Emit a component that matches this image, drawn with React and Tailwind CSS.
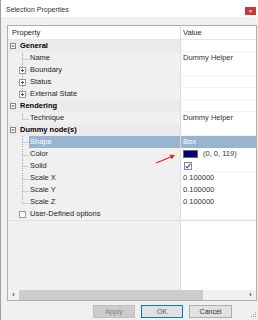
import React from 'react';

const rows = [
  { label: 'General', kind: 'cat' },
  { label: 'Name', value: 'Dummy Helper' },
  { label: 'Boundary', plus: true },
  { label: 'Status', plus: true },
  { label: 'External State', plus: true, last: true },
  { label: 'Rendering', kind: 'cat' },
  { label: 'Technique', value: 'Dummy Helper', last: true },
  { label: 'Dummy node(s)', kind: 'cat' },
  { label: 'Shape', value: 'Box', selected: true },
  { label: 'Color', kind: 'color' },
  { label: 'Solid', kind: 'check' },
  { label: 'Scale X', value: '0.100000' },
  { label: 'Scale Y', value: '0.100000' },
  { label: 'Scale Z', value: '0.100000', last: true },
  { label: 'User-Defined options', kind: 'option' },
];

const TreeGlyph = ({ plus, last, option }) => (
  <svg width="21" height="12" className="shrink-0">
    {!option && (
      <>
        <line x1="14.5" y1="0" x2="14.5" y2={last ? 6.5 : 12} stroke="#a8a8a8" strokeDasharray="1 1" />
        <line x1="14.5" y1="6.5" x2="21" y2="6.5" stroke="#a8a8a8" strokeDasharray="1 1" />
      </>
    )}
    {(plus || option) && (
      <rect x="11.5" y="3.5" width="6" height="6" fill="#fff" stroke="#9a9a9a" />
    )}
    {plus && (
      <>
        <line x1="13" y1="6.5" x2="16" y2="6.5" stroke="#555" />
        <line x1="14.5" y1="5" x2="14.5" y2="8" stroke="#555" />
      </>
    )}
  </svg>
);

const Row = ({ row }) => {
  const cat = row.kind === 'cat';
  return (
    <div className="grid grid-cols-[172px_1fr] h-[12px] leading-[12px]">
      <div className={`flex items-center ${cat ? 'bg-[#ebebeb] font-bold text-black' : 'bg-[#f0f0f0]'}`}>
        {cat ? (
          <svg width="11" height="12" className="shrink-0">
            <rect x="2.5" y="3.5" width="5" height="5" fill="#fff" stroke="#8a8a8a" />
            <line x1="3.5" y1="6" x2="6.5" y2="6" stroke="#555" />
          </svg>
        ) : (
          <TreeGlyph plus={row.plus} last={row.last} option={row.kind === 'option'} />
        )}
        <span className={`flex-1 h-full pl-[1px] ${row.selected ? 'bg-[#99b4d1] text-white' : ''}`}>{row.label}</span>
      </div>
      <div
        className={`border-l border-[#dcdcdc] pl-[2px] flex items-center ${
          row.selected ? 'bg-[#99b4d1] text-white' : 'bg-white border-b border-b-[#f3f3f3]'
        }`}
      >
        {row.kind === 'color' && (
          <>
            <span className="w-[15px] h-[8px] bg-[#000077] border border-[#6a6a6a]" />
            <span className="ml-[5px] text-[#333]">(0, 0, 119)</span>
          </>
        )}
        {row.kind === 'check' && (
          <svg width="8" height="8" className="ml-[1px]">
            <rect x="0.5" y="0.5" width="7" height="7" fill="#fff" stroke="#8a8a8a" />
            <path d="M1.8 4.2 L3.3 5.8 L6.3 1.8" fill="none" stroke="#1f5fbf" strokeWidth="1.2" />
          </svg>
        )}
        {row.value && <span className={row.selected ? '' : 'text-[#333]'}>{row.value}</span>}
      </div>
    </div>
  );
};

const App = () => {
  return (
    <div className="relative w-[258px] h-[320px] overflow-hidden bg-[#f0f0f0] border-l border-[#a0a0a0] flex flex-col font-['Liberation_Sans',Arial,sans-serif] text-[7.5px] text-[#1e1e1e]">
      {/* Title bar */}
      <div className="h-[17px] bg-white flex items-start justify-between pl-[5px] pr-[2px] shrink-0">
        <span className="mt-[5px] leading-[9px] text-[7px] text-[#333]">Selection Properties</span>
        <div className="mt-[7px] w-[11px] h-[8px] bg-[#c9393b] flex items-center justify-center text-white text-[6px] leading-none">
          ×
        </div>
      </div>

      {/* Property grid */}
      <div className="mt-[8px] ml-[6px] w-[250px] h-[276px] border border-[#adadad] bg-[#f0f0f0] flex flex-col shrink-0">
        <div className="grid grid-cols-[172px_1fr] h-[14px] leading-[14px] bg-white border-b border-[#e8e8e8]">
          <span className="pl-[4px]">Property</span>
          <span className="pl-[2px] border-l border-[#dcdcdc]">Value</span>
        </div>
        {rows.map((r) => (
          <Row key={r.label} row={r} />
        ))}
        <div className="flex-1 grid grid-cols-[172px_1fr] border-t border-[#e0e0e0]">
          <div className="bg-[#f0f0f0]" />
          <div className="bg-white border-l border-[#dcdcdc]" />
        </div>
        {/* Horizontal scrollbar */}
        <div className="h-[10px] flex bg-[#f0f0f0] shrink-0">
          <div className="w-[11px] flex items-center justify-center text-[#333] text-[7px] font-bold">‹</div>
          <div className="w-[184px] bg-[#cdcdcd]" />
          <div className="flex-1" />
          <div className="w-[11px] flex items-center justify-center text-[#333] text-[7px] font-bold">›</div>
        </div>
      </div>

      {/* Buttons */}
      <div className="mt-[4px] flex justify-end gap-[6px] pr-[26px]">
        <button className="w-[42px] h-[13px] bg-[#cccccc] border border-[#bfbfbf] text-[#838383] text-[7px] leading-none">
          Apply
        </button>
        <button className="w-[42px] h-[13px] bg-[#e1e1e1] border border-[#0078d7] text-[#555] text-[7px] leading-none">
          OK
        </button>
        <button className="w-[43px] h-[13px] bg-[#e1e1e1] border border-[#adadad] text-[#333] text-[7px] leading-none">
          Cancel
        </button>
      </div>

      {/* Red annotation arrow */}
      <svg className="absolute left-[154px] top-[152px]" width="22" height="13">
        <line x1="1" y1="11" x2="17" y2="4.5" stroke="#e8231f" strokeWidth="1.3" />
        <path d="M20 3.2 L14.5 2.6 L16.6 7.2 Z" fill="#e8231f" />
      </svg>

      {/* Resize grip */}
      <svg className="absolute right-[1px] bottom-[2px]" width="7" height="7">
        {[[5, 1], [3, 3], [5, 3], [1, 5], [3, 5], [5, 5]].map(([x, y]) => (
          <rect key={`${x}-${y}`} x={x} y={y} width="1" height="1" fill="#a0a0a0" />
        ))}
      </svg>
    </div>
  );
};

export default App;
